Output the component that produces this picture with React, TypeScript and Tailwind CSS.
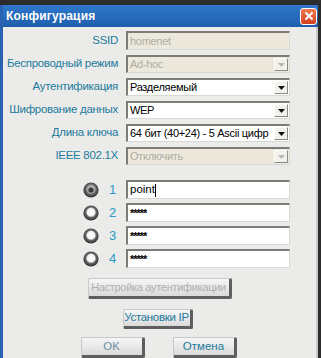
const font = { fontFamily: '"Liberation Sans", Arial, sans-serif' };

function Label({ children }: { children: string }) {
  return (
    <div className="w-[115px] shrink-0 text-right text-[11.5px] leading-none whitespace-nowrap text-[#1e7b9c] tracking-[-0.3px]">
      {children}
    </div>
  );
}

function Field({ value, disabled, select, h = "h-[18px]" }: { value: string; disabled?: boolean; select?: boolean; h?: string }) {
  return (
    <div
      className={`flex ${h} w-[164px] items-stretch border-t-2 border-l-2 border-[#7c7c78] border-r border-b border-r-[#d8d8d4] border-b-[#d8d8d4] ${
        disabled ? "bg-[#ece9dc]" : "bg-white"
      }`}
    >
      <div
        className={`flex-1 flex items-center pl-[2px] text-[11px] leading-none whitespace-nowrap overflow-hidden tracking-[-0.3px] ${
          disabled ? "text-[#aeaca2]" : "text-black"
        }`}
      >
        {value}
      </div>
      {select && (
        <div className="w-[14px] my-[1px] mr-[1px] flex items-center justify-center bg-[#f2f1ec] border-r border-b border-[#8a8a86] border-l border-l-white border-t border-t-white">
          <svg width="7" height="4" viewBox="0 0 7 4">
            <path d="M0 0h7L3.5 4z" fill={disabled ? "#b8b8b0" : "#111"} />
          </svg>
        </div>
      )}
    </div>
  );
}

function Radio({ on }: { on?: boolean }) {
  return (
    <svg width="16" height="16" viewBox="0 0 16 16">
      <defs>
        <radialGradient id={on ? "ro" : "rf"} cx="50%" cy="45%" r="55%">
          <stop offset="0%" stopColor={on ? "#c4c4c4" : "#ffffff"} />
          <stop offset="45%" stopColor={on ? "#a6a6a6" : "#f4f4f4"} />
          <stop offset="62%" stopColor="#666" />
          <stop offset="100%" stopColor="#2a2a2a" />
        </radialGradient>
      </defs>
      <circle cx="8" cy="8" r="7.6" fill={`url(#${on ? "ro" : "rf"})`} />
      {on && <circle cx="8" cy="8" r="2.6" fill="#3a3a3a" />}
    </svg>
  );
}

function Btn({ children, className = "", text = "text-[#1e7b9c]" }: { children: string; className?: string; text?: string }) {
  return (
    <div
      className={`flex items-center justify-center whitespace-nowrap bg-gradient-to-b from-[#f6f6f6] to-[#dadada] border-t border-l border-[#c8c8c8] border-r-[3px] border-b-[3px] border-r-[#5e5e5e] border-b-[#5e5e5e] rounded-[2px] leading-none ${text} ${className}`}
    >
      {children}
    </div>
  );
}

export default function App() {
  const rows: [string, string, boolean, boolean][] = [
    ["SSID", "homenet", true, false],
    ["Беспроводный режим", "Ad-hoc", true, true],
    ["Аутентификация", "Разделяемый", false, true],
    ["Шифрование данных", "WEP", false, true],
    ["Длина ключа", "64 бит (40+24) - 5 Ascii цифр", false, true],
    ["IEEE 802.1X", "Отключить", true, true],
  ];
  const keys = ["point", "*****", "*****", "*****"];

  return (
    <div className="w-[321px] h-[358px] overflow-hidden bg-[#2c2c2c] pt-[5px]" style={font}>
      <div className="flex flex-col h-[353px] border-l-[3px] border-[#2a62b0] mr-[3px]">
        <div className="h-[22px] shrink-0 flex items-center justify-between bg-gradient-to-b from-[#2f78cc] to-[#1f5eac] pl-[3px] pr-[1px]">
          <span className="text-white text-[12px] font-bold tracking-[0.2px]">Конфигурация</span>
          <div className="w-[17px] h-[17px] rounded-[3px] border border-white bg-gradient-to-b from-[#eb7a52] to-[#d2401c] flex items-center justify-center">
            <svg width="10" height="10" viewBox="0 0 10 10">
              <path d="M1.5 1.5l7 7M8.5 1.5l-7 7" stroke="#fff" strokeWidth="2" />
            </svg>
          </div>
        </div>
        <div className="flex-1 bg-[#ebebea] border-r-2 border-[#c6c6c6] pt-[4px] flex flex-col">
          <div className="flex flex-col gap-[5px]">
            {rows.map(([l, v, d, s]) => (
              <div key={l} className="flex items-center gap-[8px]">
                <Label>{l}</Label>
                <Field value={v} disabled={d} select={s} h={l === "SSID" ? "h-[19px]" : "h-[18px]"} />
              </div>
            ))}
          </div>
          <div className="flex flex-col gap-[4px] mt-[15px]">
            {keys.map((k, i) => (
              <div key={i} className="flex items-center">
                <div className="w-[80px]" />
                <Radio on={i === 0} />
                <div className="w-[27px] text-center text-[13px] leading-none text-[#2a9ac4]">{i + 1}</div>
                <div className="flex items-center h-[19px] w-[164px] bg-white border-t-2 border-l-2 border-[#7c7c78] border-r border-b border-r-[#d8d8d4] border-b-[#d8d8d4] pl-[2px] text-[11.5px] leading-none text-black">
                  {i === 0 ? (
                    <>
                      point<span className="inline-block w-px h-[13px] bg-black" />
                    </>
                  ) : (
                    <span className="text-[11px] tracking-[-1px] font-bold">{k}</span>
                  )}
                </div>
              </div>
            ))}
          </div>
          <div className="flex flex-col items-center mt-[10px] gap-[10px]">
            <Btn className="w-[144px] h-[21px] text-[11px] tracking-[-0.3px]" text="text-[#b0b0b0]">
              Настройка аутентификации
            </Btn>
            <Btn className="w-[70px] h-[20px] -ml-[4px] text-[11.5px] tracking-[-0.3px]">Установки IP</Btn>
          </div>
          <div className="flex justify-center gap-[28px] mt-[8px] -ml-[2px]">
            <Btn className="w-[64px] h-[21px] text-[11.5px]" text="text-[#6e8fa2]">OK</Btn>
            <Btn className="w-[64px] h-[21px] text-[11.5px]">Отмена</Btn>
          </div>
        </div>
      </div>
    </div>
  );
}
